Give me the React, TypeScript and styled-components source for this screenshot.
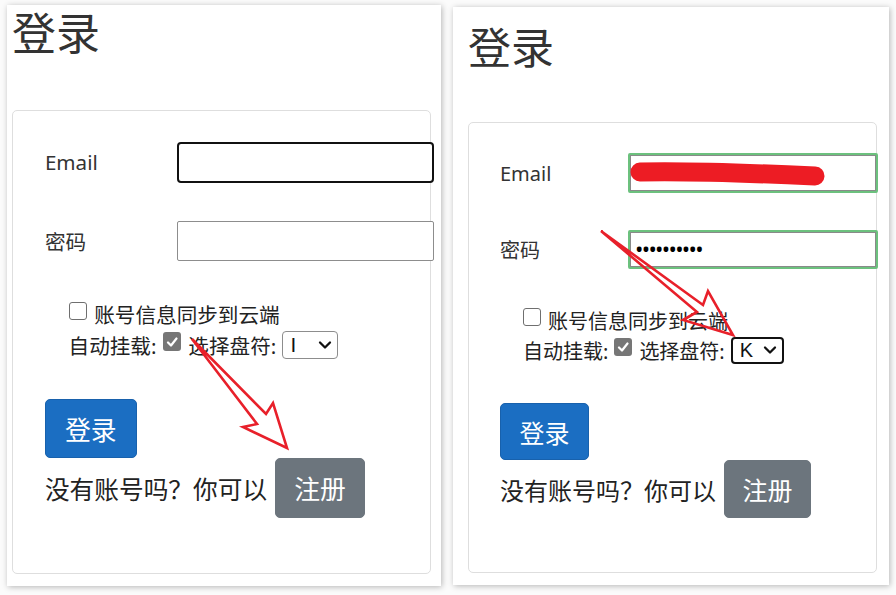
import React from "react";
import styled, { createGlobalStyle } from "styled-components";

const GlobalStyle = createGlobalStyle`
  html, body {
    margin: 0;
    padding: 0;
    background: #fbfbfb;
  }
  body {
    font-family: "Noto Sans", "Noto Sans CJK SC", sans-serif;
    color: #212529;
  }
`;

type Shot = {
  id: string;
  width: number;
  height: number;
  top: number;
  padLeft: number;
  titleTop: number;
  titleSize: number;
  cardTop: number;
  cardWidth: number;
  cardHeight: number;
  s: number;
  drive: string;
  filled: boolean;
};

const shots: Shot[] = [
  {
    id: "before",
    width: 434,
    height: 581,
    top: 5,
    padLeft: 5,
    titleTop: 4,
    titleSize: 44,
    cardTop: 57,
    cardWidth: 419,
    cardHeight: 464,
    s: 1.03,
    drive: "I",
    filled: false,
  },
  {
    id: "after",
    width: 436,
    height: 578,
    top: 7,
    padLeft: 15,
    titleTop: 17,
    titleSize: 43,
    cardTop: 55,
    cardWidth: 409,
    cardHeight: 451,
    s: 1,
    drive: "K",
    filled: true,
  },
];

const px = (v: number, s: number) => `${Math.round(v * s * 10) / 10}px`;

const Page = styled.div`
  position: relative;
  width: 896px;
  height: 595px;
  display: flex;
  align-items: flex-start;
  gap: 12px;
  padding: 0 7px;
  box-sizing: border-box;
  overflow: hidden;
`;

const Panel = styled.section<{ $w: number; $h: number; $top: number; $pad: number }>`
  width: ${({ $w }) => $w}px;
  height: ${({ $h }) => $h}px;
  margin-top: ${({ $top }) => $top}px;
  padding-left: ${({ $pad }) => $pad}px;
  box-sizing: border-box;
  background: #fff;
  box-shadow: 1px 1px 6px rgba(0, 0, 0, 0.28);
`;

const Title = styled.h1<{ $size: number; $top: number }>`
  margin: ${({ $top }) => $top}px 0 0;
  font-family: "Noto Sans CJK SC", sans-serif;
  font-size: ${({ $size }) => $size}px;
  font-weight: 400;
  line-height: 1;
  color: #333;
`;

const Card = styled.div<{ $w: number; $h: number; $top: number; $s: number }>`
  width: ${({ $w }) => $w}px;
  height: ${({ $h }) => $h}px;
  margin-top: ${({ $top }) => $top}px;
  padding: ${({ $s }) => px(30, $s)} 0 0 ${({ $s }) => px(31, $s)};
  box-sizing: border-box;
  border: 1px solid #dedede;
  border-radius: 5px;
`;

const FieldRow = styled.div<{ $s: number; $h: number; $gap: number }>`
  display: grid;
  grid-template-columns: ${({ $s }) => px(128, $s)} ${({ $s }) => px(250, $s)};
  align-items: center;
  height: ${({ $h, $s }) => px($h, $s)};
  margin-bottom: ${({ $gap, $s }) => px($gap, $s)};
`;

const Label = styled.label<{ $s: number }>`
  font-size: ${({ $s }) => px(20, $s)};
  color: #333;
`;

const InputWrap = styled.div`
  position: relative;
  height: 100%;
`;

type InputState = "focus" | "idle" | "valid";

const TextInput = styled.input<{ $state: InputState; $s: number }>`
  width: 100%;
  height: 100%;
  box-sizing: border-box;
  margin: 0;
  padding: 0 6px;
  border-radius: ${({ $state }) => ($state === "focus" ? "4px" : "2px")};
  border: ${({ $state }) =>
    $state === "focus" ? "2px solid #111" : $state === "valid" ? "2px solid #6cc17e" : "1px solid #8d8d8d"};
  box-shadow: ${({ $state }) => ($state === "valid" ? "inset 0 0 0 1px #8a8a8a" : "none")};
  background: #fff;
  font-family: "Noto Sans", sans-serif;
  font-size: ${({ $s }) => px(17, $s)};
  font-weight: 700;
  letter-spacing: 0.3px;
  color: #000;
  outline: none;
`;

const Scribble = styled.svg`
  position: absolute;
  left: 1px;
  top: 8px;
  pointer-events: none;
`;

const Checks = styled.div<{ $s: number }>`
  margin: ${({ $s }) => px(36, $s)} 0 0 ${({ $s }) => px(23, $s)};
  font-size: ${({ $s }) => px(20, $s)};
  color: #222;
`;

const CheckLine = styled.div<{ $s: number }>`
  display: flex;
  align-items: center;
  height: ${({ $s }) => px(30, $s)};
  gap: ${({ $s }) => px(6, $s)};
`;

const Box = styled.span<{ $checked?: boolean; $s: number }>`
  display: inline-flex;
  align-items: center;
  justify-content: center;
  flex: none;
  width: ${({ $s }) => px(18, $s)};
  height: ${({ $s }) => px(18, $s)};
  box-sizing: border-box;
  margin: ${({ $s }) => px(-6, $s)} 1px 0 0;
  border-radius: 3px;
  border: ${({ $checked }) => ($checked ? "none" : "1.5px solid #6f6f6f")};
  background: ${({ $checked }) => ($checked ? "#767676" : "#fff")};
`;

const Select = styled.span<{ $focus: boolean; $s: number }>`
  display: inline-flex;
  align-items: center;
  justify-content: space-between;
  width: ${({ $s, $focus }) => px($focus ? 53 : 54, $s)};
  height: ${({ $s }) => px(27, $s)};
  box-sizing: border-box;
  padding: 0 5px 0 7px;
  border-radius: 4px;
  border: ${({ $focus }) => ($focus ? "2px solid #111" : "1px solid #8d8d8d")};
  font-family: "Liberation Sans", sans-serif;
  font-size: ${({ $s }) => px(20, $s)};
  color: #111;
`;

const Button = styled.button<{ $variant: "primary" | "secondary"; $w: number; $h: number; $s: number }>`
  flex: none;
  width: ${({ $w, $s }) => px($w, $s)};
  height: ${({ $h, $s }) => px($h, $s)};
  padding: 0;
  border-radius: 5px;
  border: 1px solid ${({ $variant }) => ($variant === "primary" ? "#1861ac" : "#6c757d")};
  background: ${({ $variant }) => ($variant === "primary" ? "#1b6ec2" : "#6c757d")};
  color: #fff;
  font-family: "Noto Sans CJK SC", sans-serif;
  font-size: ${({ $s }) => px(25, $s)};
  cursor: pointer;
`;

const LoginButton = styled(Button)<{ $s: number }>`
  display: block;
  margin-top: ${({ $s }) => px(38, $s)};
`;

const SignupRow = styled.div<{ $s: number }>`
  display: flex;
  align-items: center;
  gap: ${({ $s }) => px(8, $s)};
  font-size: ${({ $s }) => px(24, $s)};
  color: #222;
`;

const Overlay = styled.svg`
  position: absolute;
  left: 0;
  top: 0;
  pointer-events: none;
`;

const Check = () => (
  <svg width="12" height="12" viewBox="0 0 12 12">
    <polyline points="2,6.5 5,9.5 10.5,2.5" fill="none" stroke="#fff" strokeWidth="2.2" strokeLinecap="round" strokeLinejoin="round" />
  </svg>
);

const Chevron = () => (
  <svg width="14" height="10" viewBox="0 0 14 10">
    <polyline points="2,2.5 7,7.5 12,2.5" fill="none" stroke="#111" strokeWidth="2.3" strokeLinecap="round" strokeLinejoin="round" />
  </svg>
);

const LoginShot = ({ shot }: { shot: Shot }) => {
  const s = shot.s;
  return (
    <Panel $w={shot.width} $h={shot.height} $top={shot.top} $pad={shot.padLeft}>
      <Title $size={shot.titleSize} $top={shot.titleTop}>登录</Title>
      <Card $w={shot.cardWidth} $h={shot.cardHeight} $top={shot.cardTop} $s={s}>
        <FieldRow $s={s} $h={40} $gap={37}>
          <Label $s={s}>Email</Label>
          <InputWrap>
            <TextInput type="text" readOnly $s={s} $state={shot.filled ? "valid" : "focus"} />
            {shot.filled && (
              <Scribble width="200" height="26" viewBox="0 0 200 26">
                <path d="M11 11 C60 10 120 12 186 15" fill="none" stroke="#ed1c24" strokeWidth="19" strokeLinecap="round" />
              </Scribble>
            )}
          </InputWrap>
        </FieldRow>
        <FieldRow $s={s} $h={39} $gap={0}>
          <Label $s={s}>密码</Label>
          <InputWrap>
            <TextInput
              type="password"
              readOnly
              $s={s}
              $state={shot.filled ? "valid" : "idle"}
              value={shot.filled ? "0123456789" : ""}
            />
          </InputWrap>
        </FieldRow>
        <Checks $s={s}>
          <CheckLine $s={s}>
            <Box $s={s} />
            <span>账号信息同步到云端</span>
          </CheckLine>
          <CheckLine $s={s}>
            <span>自动挂载:</span>
            <Box $s={s} $checked>
              <Check />
            </Box>
            <span>选择盘符:</span>
            <Select $s={s} $focus={shot.filled}>
              <span>{shot.drive}</span>
              <Chevron />
            </Select>
          </CheckLine>
        </Checks>
        <LoginButton $variant="primary" $w={89} $h={57} $s={s}>
          登录
        </LoginButton>
        <SignupRow $s={s}>
          <span>没有账号吗？你可以</span>
          <Button $variant="secondary" $w={87} $h={58} $s={s}>
            注册
          </Button>
        </SignupRow>
      </Card>
    </Panel>
  );
};

export default function App() {
  return (
    <>
      <GlobalStyle />
      <Page>
        {shots.map((shot) => (
          <LoginShot key={shot.id} shot={shot} />
        ))}
        <Overlay width="896" height="595" viewBox="0 0 896 595">
          <g fill="none" stroke="#e8202a" strokeWidth="2.6" strokeLinejoin="miter">
            <polygon points="192,339 266,414 273,403 287,448 243,427 257,424" />
            <polygon points="601,231 703,305 708,291 733,335 683,320 697,312" />
          </g>
        </Overlay>
      </Page>
    </>
  );
}
